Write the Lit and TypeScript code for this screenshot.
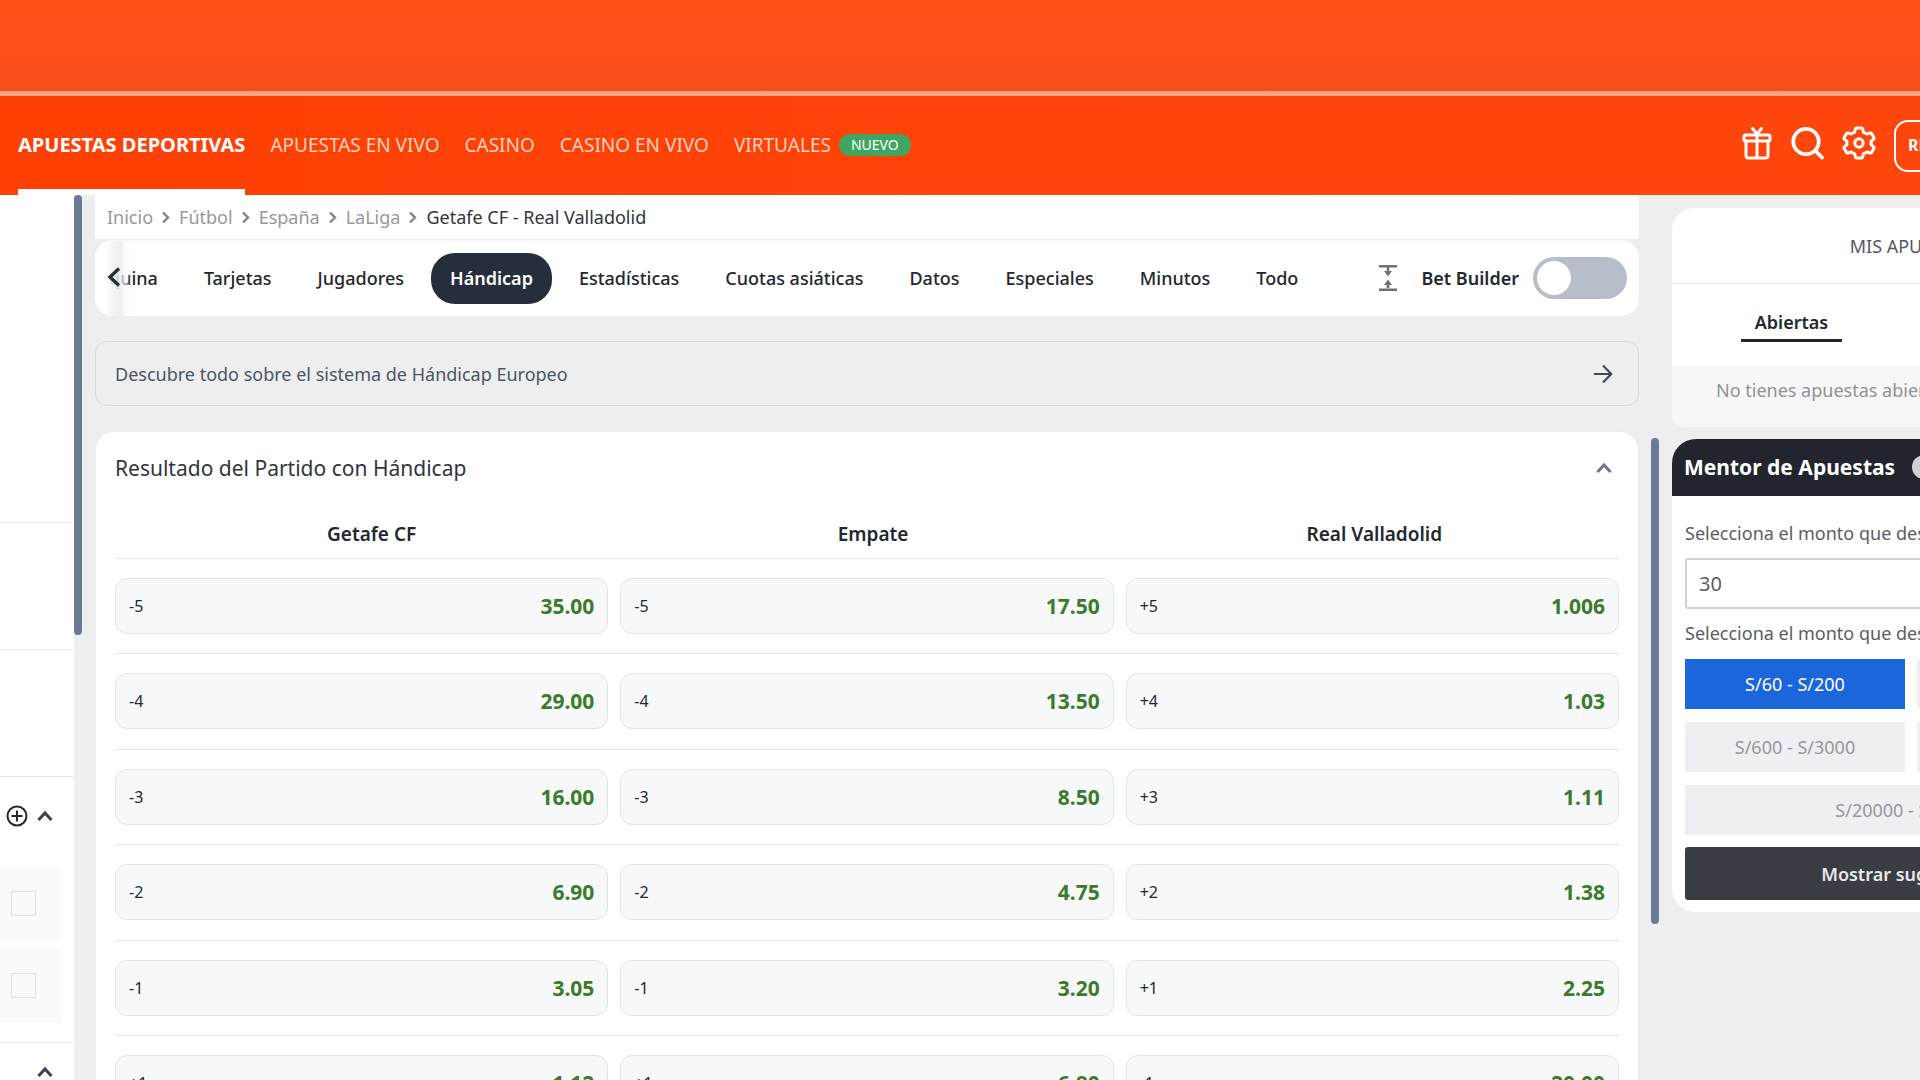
import { LitElement, html, css, svg } from "lit";
import { customElement, state } from "lit/decorators.js";
import { classMap } from "lit/directives/class-map.js";

const NAV = ["APUESTAS DEPORTIVAS", "APUESTAS EN VIVO", "CASINO", "CASINO EN VIVO", "VIRTUALES"];
const CRUMBS = ["Inicio", "Fútbol", "España", "LaLiga"];
const TABS = ["quina", "Tarjetas", "Jugadores", "Hándicap", "Estadísticas", "Cuotas asiáticas", "Datos", "Especiales", "Minutos", "Todo"];
const TEAMS = ["Getafe CF", "Empate", "Real Valladolid"];
const ODDS: [string, string][][] = [
  [["-5", "35.00"], ["-5", "17.50"], ["+5", "1.006"]],
  [["-4", "29.00"], ["-4", "13.50"], ["+4", "1.03"]],
  [["-3", "16.00"], ["-3", "8.50"], ["+3", "1.11"]],
  [["-2", "6.90"], ["-2", "4.75"], ["+2", "1.38"]],
  [["-1", "3.05"], ["-1", "3.20"], ["+1", "2.25"]],
  [["+1", "1.12"], ["+1", "6.80"], ["-1", "20.00"]],
];
const RANGES = ["S/60 - S/200", "S/200 - S/600", "S/600 - S/3000", "S/3000 - S/20000", "S/20000 - S/60000"];

const chevronUp = () => html`<svg class="chev" width="18" height="14" viewBox="0 0 18 14" aria-hidden="true">${svg`<path d="M2.500 11 9 4l6.500 7" fill="none" stroke="currentColor" stroke-width="3"/>`}</svg>`;

@customElement("app-root")
export class AppRoot extends LitElement {
  @state() private tab = "Hándicap";
  @state() private range = RANGES[0];

  static styles = css`
    :host {
      display: flex;
      flex-direction: column;
      height: 100vh;
      overflow: hidden;
      background: #edeef0;
      color: #23272e;
      font: 18px/24px "Noto Sans", "Open Sans", sans-serif;
    }
    *, *::before { box-sizing: border-box; }
    button, input { font: inherit; color: inherit; margin: 0; }
    button { padding: 0; border: 0; background: none; cursor: pointer; white-space: nowrap; }
    a { color: inherit; text-decoration: none; }
    svg { display: block; flex: none; }
    h2, p { margin: 0; font-size: 18px; font-weight: 400; }

    .promo { flex: none; height: 96px; border-bottom: 5px solid #ffa183; background: linear-gradient(#ff4f17, #ff4f19 50%, #f44e1c); }
    .top { flex: none; display: flex; align-items: stretch; height: 99px; padding-left: 18px; overflow: hidden; background: linear-gradient(90deg, #ff4005, #ff460d); color: #fff; }
    .nav { flex: 1; min-width: 0; display: flex; gap: 25px; }
    .nav a { display: flex; align-items: center; gap: 8px; padding-bottom: 2px; font-size: 19px; color: #ffd3bf; white-space: nowrap; }
    .nav a.on { border-bottom: 6px solid #fff; border-radius: 3px 3px 0 0; padding: 4px 0 0; font-size: 20px; font-weight: 700; color: #fff; }
    .new { padding: 0 12px; border-radius: 11px; background: #3fa662; color: #fff; font-size: 14px; line-height: 22px; }
    .tools { flex: 0 0 178px; min-width: 0; display: flex; align-items: center; gap: 18px; }
    .tools button { flex: none; padding-bottom: 6px; }
    .tools .join { height: 52px; padding: 0 12px 2px; border: 2px solid #fff; border-radius: 14px; font-size: 16px; font-weight: 700; }

    .body { flex: 1; min-height: 0; display: flex; align-items: flex-start; }
    .side { flex: none; width: 74px; height: 100%; overflow: hidden; background: #fff; color: #37404d; }
    .block { height: 127px; border-bottom: 1px solid #e9eaec; }
    .block.tall { height: 328px; }
    .group { border-bottom: 1px solid #e9eaec; padding-bottom: 19px; }
    .ghead { display: flex; align-items: center; justify-content: flex-end; gap: 8px; height: 78px; padding-right: 20px; }
    .ghead.low { height: 58px; }
    .picks { display: flex; flex-direction: column; gap: 7px; padding: 11px 13px 0 0; }
    .pick { display: flex; align-items: center; justify-content: flex-end; height: 75px; padding-right: 25px; background: #fafafa; }
    .pick input { appearance: none; width: 25px; height: 25px; border: 1px solid #dcdde2; background: #fafafa; }
    .rail { flex: none; width: 8px; border-radius: 4px; background: #6b7a90; }
    .rail.a { height: 440px; margin-right: 13px; }
    .rail.b { height: 486px; margin: 243px 13px 0 12px; }

    .main { flex: 1; min-width: 0; }
    .crumbs { display: flex; align-items: center; gap: 8px; height: 44px; padding-left: 12px; background: #fff; color: #96989c; white-space: nowrap; }
    .crumbs [aria-current] { color: #31353c; }
    .bar { display: flex; align-items: center; justify-content: space-between; height: 76px; margin-top: 1px; padding-right: 12px; border-radius: 18px; background: #fff; position: relative; overflow: hidden; border-top: 1px solid #f6f7f8; }
    .tabs { display: flex; gap: 8px; min-width: 0; overflow: hidden; }
    .tab { flex: none; height: 51px; padding: 0 19px 2px; border-radius: 24px; font-weight: 500; }
    .tab:first-child { padding-left: 14px; }
    .tab.on { background: #272e3b; color: #fff; font-weight: 600; }
    .prev { position: absolute; left: 0; top: 0; bottom: 0; width: 37px; display: flex; align-items: center; padding: 0 0 4px 12px; background: linear-gradient(90deg, #fff 10px, #f3f4f6dd 17px, #e9ebeedd 25px, #f5f6f799 30px, #fff0 36px); color: #272e3b; }
    .builder { flex: none; display: flex; align-items: center; padding-bottom: 2px; font-weight: 600; }
    .builder label { margin: 0 14px 0 24px; white-space: nowrap; }
    .builder input { appearance: none; position: relative; width: 94px; height: 42px; border-radius: 21px; background: #b8bec9; }
    .builder input::before { content: ""; position: absolute; left: 4px; top: 4px; width: 34px; height: 34px; border-radius: 50%; background: #fff; }
    .builder input:checked::before { left: 56px; }
    .info { display: flex; align-items: center; justify-content: space-between; height: 65px; margin: 25px 0; padding: 0 25px 0 19px; border: 1px solid #d5d8e0; border-radius: 12px; color: #4b5563; }
    .card { padding: 0 19px; border: 1px solid #e8eaed; border-radius: 18px; background: #fff; }
    .chead { display: flex; align-items: center; justify-content: space-between; height: 71px; padding-right: 6px; color: #6b7a90; }
    .chead h2 { font-size: 21px; color: #31353c; }
    table, tbody, thead { display: block; }
    tr { display: grid; grid-template-columns: repeat(3, 1fr); }
    th { padding: 19px 0 12px 12px; font-size: 19px; font-weight: 600; }
    td { padding: 0; }
    tbody tr { gap: 12px; padding: 19px 0; border-top: 1px solid #e4e6ea; }
    tbody tr:nth-child(even) { padding-bottom: 20px; }
    .odd { display: flex; align-items: center; justify-content: space-between; width: 100%; height: 56px; padding: 0 13px; border: 1px solid #e1e4e8; border-radius: 12px; background: #f7f8fa; font-size: 16px; }
    .odd b { font-size: 21px; color: #3d7a2b; }

    .aside { flex: 0 0 248px; min-width: 0; padding-top: 13px; overflow: hidden; }
    .panel { width: 478px; overflow: hidden; border-radius: 22px 22px 12px 12px; background: #fff; }
    .ptitle { height: 76px; display: flex; align-items: center; justify-content: center; border-bottom: 1px solid #e6e8eb; color: #55585f; }
    .ptabs { display: grid; grid-template-columns: 1fr 1fr; justify-items: center; align-items: center; height: 82px; }
    .ptabs button { height: 36px; margin-bottom: 2px; padding: 0 14px 2px; border-bottom: 3px solid transparent; font-weight: 600; color: #6b7280; }
    .ptabs .on { border-color: #23272e; color: #23272e; }
    .empty { height: 61px; padding: 12px 44px; background: #f6f7f9; color: #909297; white-space: nowrap; }
    .mentor { margin-top: 12px; border-radius: 24px; }
    .mhead { display: flex; align-items: center; gap: 17px; height: 57px; padding: 0 12px 2px; background: #22252d; color: #fff; }
    .mhead h2 { font-size: 21px; font-weight: 700; }
    .help { width: 24px; height: 24px; border-radius: 50%; background: #d0d1d3; color: #22252d; font-size: 16px; line-height: 24px; text-align: center; }
    .form { display: flex; flex-direction: column; padding: 25px 13px 12px; color: #5a5d63; }
    .amount { height: 51px; margin: 13px 0 12px; padding: 0 12px; border: 2px solid #d0d1d8; border-radius: 3px; background: #fff; font-size: 20px; }
    .form label, .legend { white-space: nowrap; }
    .ranges { display: grid; grid-template-columns: 1fr 1fr; gap: 13px 12px; margin: 14px 0 12px; }
    .ranges button { height: 50px; background: #eeeff3; color: #96989c; }
    .ranges button:last-child { grid-column: 1 / -1; }
    .ranges .on { background: #1b66db; color: #fff; }
    .send { height: 53px; border-radius: 3px; background: #3a3c44; color: #e9e9ea; font-weight: 600; }
  `;

  render() {
    return html`
      <div class="promo"></div>
      <header class="top">
        <nav class="nav" aria-label="Principal">
          ${NAV.map((n, i) => html`<a href="#" class=${classMap({ on: i === 0 })}>${n}${i === 4 ? html`<span class="new">NUEVO</span>` : ""}</a>`)}
        </nav>
        <div class="tools">
          <button aria-label="Regalos"><svg width="30" height="34" viewBox="0 0 30 34" fill="none" stroke="#fff" stroke-width="3" stroke-linejoin="round" stroke-linecap="round"><rect x="2" y="9" width="26" height="6" rx="1.500"/><path d="M4 15v14.500Q4 32 6.500 32h17q2.500 0 2.500-2.500V15M15 9v23M15 8l-4.500-5.500M15 8l4.500-5.500"/></svg></button>
          <button aria-label="Buscar"><svg width="34" height="34" viewBox="0 0 34 34" fill="none" stroke="#fff" stroke-width="3.800" stroke-linecap="round"><circle cx="16" cy="15.500" r="12.700"/><path d="m25 24.500 7 7"/></svg></button>
          <button aria-label="Ajustes"><svg width="34" height="34" viewBox="0 0 34 34" fill="none" stroke="#fff" stroke-width="3" stroke-linejoin="round"><path d="M14.500 2h5q1 0 1.200 1l.7 3.200q2 .6 3.300 1.800L28 7q1-.3 1.500.6l2.300 4q.5.900-.2 1.600L29 15.300q.4 1.700 0 3.400l2.600 2.100q.7.700.2 1.600l-2.300 4q-.5.900-1.500.6l-3.300-1q-1.300 1.200-3.300 1.800l-.7 3.200q-.2 1-1.200 1h-5q-1 0-1.200-1l-.7-3.200q-2-.6-3.300-1.800L6 27q-1 .3-1.500-.6l-2.300-4q-.5-.9.200-1.600L5 18.700q-.4-1.700 0-3.400l-2.600-2.100q-.7-.7-.2-1.600l2.300-4Q5 6.700 6 7l3.300 1q1.300-1.200 3.300-1.800l.7-3.200q.2-1 1.200-1z"/><circle cx="17" cy="17" r="4.200"/></svg></button>
          <button class="join">REGÍSTRATE</button>
        </div>
      </header>
      <div class="body">
        <aside class="side">
          <div class="block tall"></div>
          <div class="block"></div>
          <div class="block"></div>
          <section class="group">
            <div class="ghead">
              <svg width="22" height="22" viewBox="0 0 22 22" fill="none" stroke="#23272e" stroke-width="2"><circle cx="11" cy="11" r="9.500"/><path d="M11 5.500v11M5.500 11h11"/></svg>
              ${chevronUp()}
            </div>
            <div class="picks">
              <div class="pick"><input type="checkbox" aria-label="Selección 1"></div>
              <div class="pick"><input type="checkbox" aria-label="Selección 2"></div>
            </div>
          </section>
          <section class="group"><div class="ghead low">${chevronUp()}</div></section>
        </aside>
        <div class="rail a"></div>
        <main class="main">
          <nav class="crumbs" aria-label="Ruta">
            ${CRUMBS.map(c => html`<a href="#">${c}</a><svg width="10" height="13" viewBox="0 0 10 13"><path d="m2 1.500 5 5-5 5" fill="none" stroke="#808287" stroke-width="2.400"/></svg>`)}
            <span aria-current="page">Getafe CF - Real Valladolid</span>
          </nav>
          <div class="bar">
            <div class="tabs">
              ${TABS.map(t => html`<button class=${classMap({ tab: true, on: t === this.tab })} @click=${() => (this.tab = t)}>${t}</button>`)}
            </div>
            <button class="prev" aria-label="Anterior"><svg width="14" height="20" viewBox="0 0 14 20"><path d="M12 1.500 3 10l9 8.500" fill="none" stroke="currentColor" stroke-width="3.400"/></svg></button>
            <div class="builder">
              <svg width="18" height="26" viewBox="0 0 18 26" fill="#6f7175"><path d="M0 0h18v2.500H0zM0 23.500h18V26H0zM7.700 2h2.600v4H13l-4 5.500L5 6h2.700zM7.700 24h2.600v-4H13l-4-5.500L5 20h2.700z"/></svg>
              <label for="bb">Bet Builder</label><input id="bb" type="checkbox" role="switch">
            </div>
          </div>
          <a class="info" href="#">Descubre todo sobre el sistema de Hándicap Europeo
            <svg width="20" height="20" viewBox="0 0 20 20" fill="none" stroke="#3f4a59" stroke-width="2.200" stroke-linejoin="round"><path d="M1 10h17M10 1.500l8.300 8.500-8.300 8.500"/></svg>
          </a>
          <section class="card">
            <div class="chead"><h2>Resultado del Partido con Hándicap</h2><button aria-label="Contraer">${chevronUp()}</button></div>
            <table>
              <thead><tr>${TEAMS.map(t => html`<th scope="col">${t}</th>`)}</tr></thead>
              <tbody>${ODDS.map(r => html`<tr>${r.map(([h, o]) => html`<td><button class="odd"><span>${h}</span><b>${o}</b></button></td>`)}</tr>`)}</tbody>
            </table>
          </section>
        </main>
        <div class="rail b"></div>
        <aside class="aside">
          <section class="panel">
            <h2 class="ptitle">MIS APUESTAS</h2>
            <div class="ptabs"><button class="on">Abiertas</button><button>Resueltas</button></div>
            <p class="empty">No tienes apuestas abiertas en este momento</p>
          </section>
          <section class="panel mentor">
            <div class="mhead"><h2>Mentor de Apuestas</h2><button class="help" aria-label="Ayuda">?</button></div>
            <div class="form">
              <label for="amount">Selecciona el monto que deseas apostar</label>
              <input id="amount" class="amount" value="30">
              <span class="legend">Selecciona el monto que deseas ganar</span>
              <div class="ranges">
                ${RANGES.map(r => html`<button class=${classMap({ on: r === this.range })} @click=${() => (this.range = r)}>${r}</button>`)}
              </div>
              <button class="send">Mostrar sugerencias</button>
            </div>
          </section>
        </aside>
      </div>
    `;
  }
}
